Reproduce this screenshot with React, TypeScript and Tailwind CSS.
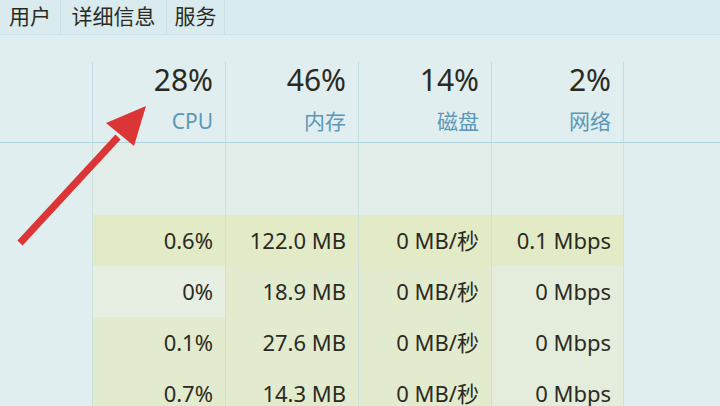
const tabs = [
  { label: "用户", w: "w-[61px]" },
  { label: "详细信息", w: "w-[106px]" },
  { label: "服务", w: "w-[58px]" },
];

const heads = [
  { pct: "28%", name: "CPU" },
  { pct: "46%", name: "内存" },
  { pct: "14%", name: "磁盘" },
  { pct: "2%", name: "网络" },
];

const rows = [
  ["0.6%", "122.0 MB", "0 MB/秒", "0.1 Mbps"],
  ["0%", "18.9 MB", "0 MB/秒", "0 Mbps"],
  ["0.1%", "27.6 MB", "0 MB/秒", "0 Mbps"],
  ["0.7%", "14.3 MB", "0 MB/秒", "0 Mbps"],
];

const cellBg = (r: number, c: number) => {
  if (r === 0) return "bg-[#e2ebc6]";
  if (c === 0 && r === 1) return "bg-[#e6efe1]";
  if (c === 3) return "bg-[#e4ecdb]";
  return "bg-[#e3ebcf]";
};

export default function App() {
  return (
    <div
      className="relative w-[720px] h-[406px] overflow-hidden bg-[#e1eef0] text-[#2b2a22]"
      style={{ fontFamily: '"Noto Sans", "Noto Sans CJK SC", sans-serif' }}
    >
      <div className="flex h-[35px] bg-[#d9ebee] border-b border-[#cfe3e6]">
        {tabs.map((t) => (
          <div
            key={t.label}
            className={`${t.w} flex items-center justify-center text-[21px] border-r border-[#cbe0e3]`}
          >
            {t.label}
          </div>
        ))}
      </div>

      <div className="flex pt-[27px] border-b border-[#aed3dc]">
        <div className="w-[92px]" />
        {heads.map((h, i) => (
          <div
            key={h.name}
            className={`w-[133px] h-[80px] border-l border-[#c4dde2] ${i === 3 ? "border-r" : ""} flex flex-col items-end pr-[12px]`}
          >
            <div className="text-[30px] leading-[36px]">{h.pct}</div>
            <div className="text-[21px] leading-[28px] mt-[9px] text-[#5d97b6]">{h.name}</div>
          </div>
        ))}
      </div>

      <div className="flex">
        <div className="w-[92px]" />
        {heads.map((h, c) => (
          <div
            key={h.name}
            className={`w-[133px] border-l border-[#cde2dd] ${c === 3 ? "border-r" : ""} bg-[#e3eeea] flex flex-col`}
          >
            <div className="h-[72px]" />
            {rows.map((r, ri) => (
              <div
                key={ri}
                className={`h-[51px] flex items-center justify-end pr-[12px] text-[22px] ${cellBg(ri, c)}`}
              >
                {r[c]}
              </div>
            ))}
          </div>
        ))}
      </div>

      <svg className="absolute left-0 top-0" width="720" height="406" viewBox="0 0 720 406">
        <line x1="20" y1="243" x2="118" y2="137" stroke="#dc3535" strokeWidth="7" />
        <polygon points="146,106 106,123 134,146" fill="#dc3535" />
      </svg>
    </div>
  );
}
